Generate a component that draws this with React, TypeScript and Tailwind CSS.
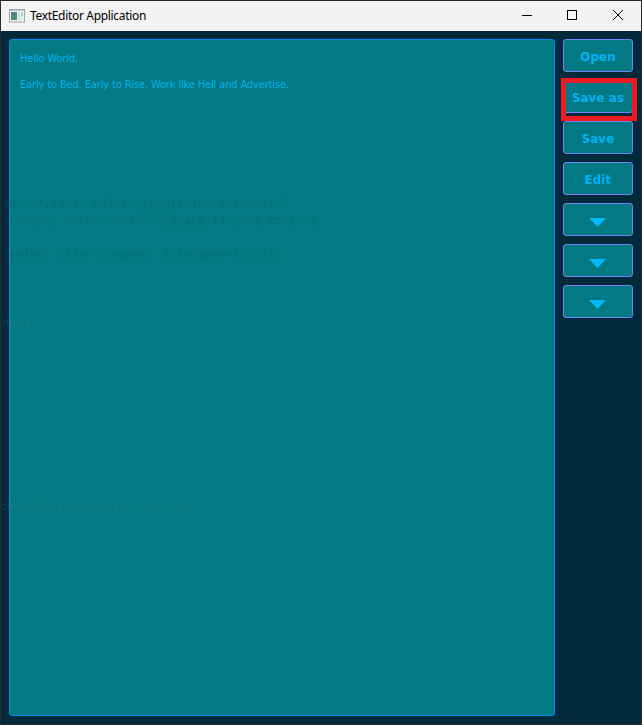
import React from "react";

const buttons = ["Open", "Save as", "Save", "Edit", null, null, null];

// Code from the editor window behind, faintly showing through the translucent surface.
const backdrop = [
  { place: "left-[1px] top-[166px]", tone: "text-[#00505c]/25", before: "55,217,100); color: ", mark: "rgba", after: '(0,190,255,255);"' },
  { place: "left-[1px] top-[183px]", tone: "text-[#00505c]/25", before: ": 0.5px; border-color: ", mark: "rgba", after: '(0,140,255,255);")' },
  { place: "left-[1px] top-[217px]", tone: "text-[#00505c]/25", before: '"select file to open", filetypes=(', mark: '("")', after: "))" },
  { place: "left-[1px] top-[285px]", tone: "text-[#4a8a90]/25", before: "how)", mark: "", after: "" },
  { place: "left-[-1px] top-[469px]", tone: "text-[#4a8a90]/20", before: "charmProjects/test1/apps.py", mark: "", after: "" },
];

function AppIcon() {
  return (
    <svg className="ml-2 h-[14px] w-4 shrink-0" viewBox="0 0 16 14">
      <defs>
        <linearGradient id="pane" x1="0" y1="0" x2="0.5" y2="1">
          <stop offset="0" stopColor="#52788f" />
          <stop offset="1" stopColor="#419879" />
        </linearGradient>
      </defs>
      <rect x="0.5" y="0.5" width="15" height="12.5" fill="#eef1f3" stroke="#a2a7ab" />
      <path d="M1 1.5h14" stroke="#bdc1c5" />
      <rect x="2" y="3" width="6" height="8" fill="url(#pane)" />
      <rect x="9" y="3" width="2" height="8" fill="#d3dce3" />
      <rect x="12" y="3" width="2" height="4" fill="#b8cdbd" />
      <rect x="12" y="7" width="2" height="4" fill="#e0e5e8" />
    </svg>
  );
}

function TitleBar() {
  return (
    <header className="flex h-[30px] shrink-0 items-center bg-[#f3f3f3] text-black">
      <AppIcon />
      <h1 className="ml-[5px] whitespace-nowrap font-['Noto_Sans',sans-serif] text-[12px] leading-[30px] tracking-[-0.32px]">
        TextEditor Application
      </h1>
      <div className="ml-auto flex">
        <svg width="46" height="30" fill="none" stroke="#000" shapeRendering="crispEdges">
          <path d="M18 14.5h10" />
        </svg>
        <svg width="45" height="30" fill="none" stroke="#000" shapeRendering="crispEdges">
          <rect x="17.5" y="9.5" width="9" height="9" />
        </svg>
        <svg width="46" height="30" fill="none" stroke="#000">
          <path d="M18 9l10 10M28 9l-10 10" />
        </svg>
      </div>
    </header>
  );
}

export default function App() {
  return (
    <div className="flex h-[725px] w-[642px] flex-col overflow-hidden border border-[#2a292b] bg-[#022a3a]">
      <TitleBar />
      <main className="relative flex min-h-0 flex-1 gap-2 overflow-hidden p-2">
        <section className="w-[546px] shrink-0 rounded-[3px] border border-[#008cf5] bg-[#037983] pl-[10px] pt-[6px] font-['DejaVu_Sans_Condensed','DejaVu_Sans',sans-serif] text-[11px] leading-[26px] text-[#00b2ee]">
          <p className="w-fit whitespace-nowrap tracking-[-0.14px]">Hello World,</p>
          <p className="w-fit whitespace-nowrap tracking-[-0.14px]">
            Early to Bed, Early to Rise, Work like Hell and Advertise.
          </p>
        </section>
        <nav className="flex w-[70px] shrink-0 flex-col gap-2">
          {buttons.map((label, i) => (
            <div key={i} className="relative h-[33px]">
              <button className="flex h-full w-full items-center justify-center whitespace-nowrap rounded-[3px] border border-[#7580f5] bg-[#037983] pt-[2px] font-['DejaVu_Sans_Condensed','DejaVu_Sans',sans-serif] text-[13px] font-bold tracking-[0.2px] text-[#00b4f5]">
                {label ?? (
                  <svg width="17" height="9" className="mr-px mt-[3px]">
                    <path d="M0 0h17L8.5 9z" fill="#00b9f7" />
                  </svg>
                )}
              </button>
              {label === "Save as" && (
                <span className="absolute -left-[2px] -top-[2px] z-10 h-[43px] w-[76px] border-[5px] border-[#ed1c24]" />
              )}
            </div>
          ))}
        </nav>
        <div className="pointer-events-none absolute inset-0" aria-hidden="true">
          {backdrop.map((line) => (
            <div
              key={line.place}
              className={`absolute whitespace-pre font-['Liberation_Mono',monospace] text-[11.667px] leading-[14px] ${line.place} ${line.tone}`}
            >
              {line.before}
              <span className="underline decoration-wavy decoration-1">{line.mark}</span>
              {line.after}
            </div>
          ))}
        </div>
      </main>
    </div>
  );
}
